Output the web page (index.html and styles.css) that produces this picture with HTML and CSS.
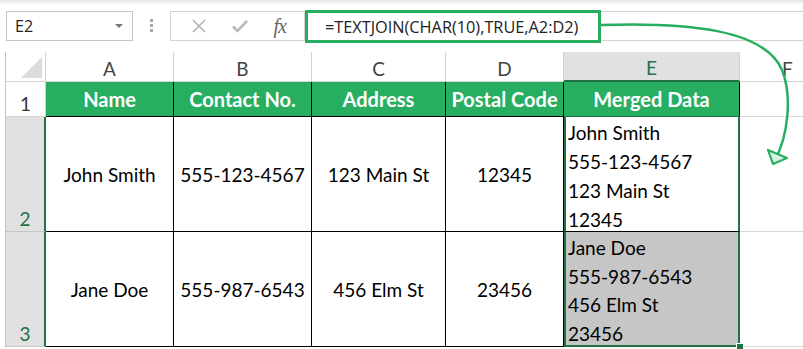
FILE: index.html
```html
<!DOCTYPE html>
<html lang="en">
  <head>
    <meta charset="UTF-8" />
    <meta name="viewport" content="width=device-width, initial-scale=1.0" />
    <title>TEXTJOIN merged data</title>
    <link rel="stylesheet" href="styles.css">
  </head>
  <body>
    <div class="topbar">
      <div class="namebox">
        <span>E2</span>
        <span class="drop"></span>
      </div>
      <div class="grip">
        <svg width="4" height="14" viewBox="0 0 4 14"><rect x="0" y="0" width="3" height="3" fill="#a6a6a6"/><rect x="0" y="5" width="3" height="3" fill="#a6a6a6"/><rect x="0" y="10" width="3" height="3" fill="#a6a6a6"/></svg>
      </div>
      <div class="fx-buttons">
        <svg class="btn" width="16" height="16" viewBox="0 0 16 16"><path d="M2 2 L14 14 M14 2 L2 14" stroke="#b3b3b3" stroke-width="1.6" fill="none"/></svg>
        <svg class="btn" width="18" height="16" viewBox="0 0 18 16"><path d="M2 8.5 L6.5 13 L16 3" stroke="#b8b8b8" stroke-width="2.6" fill="none"/></svg>
        <span class="fx">fx</span>
      </div>
      <div class="formula">
        <div class="formula-box">=TEXTJOIN(CHAR(10),TRUE,A2:D2)</div>
      </div>
    </div>

    <div class="sheet">
      <div class="corner"><span class="tri"></span></div>
      <div class="col">A</div>
      <div class="col">B</div>
      <div class="col">C</div>
      <div class="col">D</div>
      <div class="col col-sel">E</div>
      <div class="col col-last">F</div>

      <div class="row-num">1</div>
      <div class="head">Name</div>
      <div class="head">Contact No.</div>
      <div class="head">Address</div>
      <div class="head">Postal Code</div>
      <div class="head">Merged Data</div>
      <div class="empty"></div>

      <div class="row-num row-sel">2</div>
      <div class="cell">John Smith</div>
      <div class="cell">555-123-4567</div>
      <div class="cell">123 Main St</div>
      <div class="cell">12345</div>
      <div class="merged first">John Smith<br>555-123-4567<br>123 Main St<br>12345</div>
      <div class="empty"></div>

      <div class="row-num row-sel">3</div>
      <div class="cell">Jane Doe</div>
      <div class="cell">555-987-6543</div>
      <div class="cell">456 Elm St</div>
      <div class="cell">23456</div>
      <div class="merged last">Jane Doe<br>555-987-6543<br>456 Elm St<br>23456<span class="handle"></span></div>
      <div class="empty"></div>
    </div>

    <!-- annotation arrow from the formula to the merged column -->
    <svg class="arrow" width="803" height="349" viewBox="0 0 803 349">
      <path d="M601 25 C 690 22, 765 30, 782 70 C 792 95, 789 135, 774 162" stroke="#27ae60" stroke-width="2.5" fill="none"/>
      <path d="M768 150 L773 164 L787 158 Z" stroke="#27ae60" stroke-width="2.2" fill="#d9f2e3" stroke-linejoin="round"/>
    </svg>
  </body>
</html>
```

FILE: styles.css
```css
* {
  margin: 0;
  padding: 0;
  box-sizing: border-box;
}
body {
  width: 803px;
  height: 349px;
  overflow: hidden;
  position: relative;
  background: #fff;
  font-family: Lato, "Open Sans", sans-serif;
  color: #000;
}

/* formula bar */
.topbar {
  height: 52px;
  display: flex;
  align-items: flex-start;
  padding: 11px 0 0 6px;
  background: linear-gradient(to bottom, #e4e4e4 0px, #ffffff 5px);
}
.namebox {
  width: 127px;
  height: 30px;
  border: 1px solid #c6c6c6;
  background: #fff;
  display: flex;
  align-items: center;
  justify-content: space-between;
  padding: 0 9px 0 8px;
  font-family: "Open Sans", sans-serif;
  font-size: 16px;
  color: #222;
}
.drop {
  width: 0;
  height: 0;
  border-left: 4px solid transparent;
  border-right: 4px solid transparent;
  border-top: 4px solid #777;
}
.grip {
  width: 37px;
  height: 30px;
  display: flex;
  align-items: center;
  justify-content: center;
}
.fx-buttons {
  width: 135px;
  height: 30px;
  border: 1px solid #d4d4d4;
  background: #fff;
  display: flex;
  align-items: center;
  justify-content: space-around;
  padding: 0 6px 0 8px;
}
.fx {
  font-family: "Liberation Serif", serif;
  font-style: italic;
  font-size: 20px;
  color: #666;
  letter-spacing: -1px;
}
.formula {
  flex: 1;
  height: 30px;
  border-top: 1px solid #d4d4d4;
  border-bottom: 1px solid #d4d4d4;
}
.formula-box {
  width: 296px;
  height: 33px;
  margin-top: -2px;
  border: 3px solid #27ae60;
  padding-left: 17px;
  display: flex;
  align-items: center;
  font-family: "Open Sans", sans-serif;
  font-size: 16.3px;
  color: #222;
  background: #fff;
}

/* sheet grid */
.sheet {
  display: grid;
  grid-template-columns: 40px 128px 138px 134px 118px 176px 96px;
  grid-template-rows: 30px 35px 115px 115px;
  margin-left: 5px;
  border-left: 1px solid #c3c3c3;
  width: 830px;
}
.corner {
  border-right: 1px solid #d4d4d4;
  border-bottom: 1px solid #d4d4d4;
  position: relative;
}
.tri {
  position: absolute;
  right: 3px;
  bottom: 3px;
  width: 0;
  height: 0;
  border-left: 21px solid transparent;
  border-bottom: 21px solid #dcdcdc;
}
.col {
  display: flex;
  align-items: center;
  justify-content: center;
  padding-top: 3px;
  font-size: 19px;
  color: #444;
  border-right: 1px solid #d4d4d4;
  border-bottom: 1px solid #d4d4d4;
}
.col-sel {
  background: #e1e1e1;
  color: #217346;
  border-bottom: 2px solid #217346;
}
.col-last {
  border-right: none;
  justify-content: flex-start;
  padding-left: 42px;
}
.row-num {
  display: flex;
  align-items: flex-end;
  justify-content: center;
  padding-bottom: 1px;
  font-size: 19px;
  color: #333;
  border-right: 1px solid #d4d4d4;
  border-bottom: 1px solid #d4d4d4;
}
.row-sel {
  background: #e1e1e1;
  color: #217346;
  border-right: 2px solid #217346;
  border-bottom: 1px solid #c4c4c4;
}
.head {
  display: flex;
  align-items: center;
  justify-content: center;
  background: #27ae60;
  color: #fff;
  font-weight: bold;
  font-size: 20px;
  border-right: 1px solid #000;
  border-bottom: 1px solid #000;
  white-space: nowrap;
}
.cell {
  display: flex;
  align-items: center;
  justify-content: center;
  font-size: 19px;
  border-right: 1px solid #000;
  border-bottom: 1px solid #000;
  white-space: nowrap;
}
.merged {
  font-size: 19px;
  line-height: 29px;
  padding-left: 2px;
  white-space: nowrap;
  border-left: 2px solid #217346;
  border-right: 2px solid #217346;
  position: relative;
}
.merged.first {
  border-top: 1px solid #217346;
  border-bottom: 1px solid #000;
  margin-top: -1px;
  padding-top: 1px;
}
.merged.last {
  background: #c6c6c6;
  border-bottom: 2px solid #217346;
  padding-top: 2px;
  line-height: 28.5px;
}
.handle {
  position: absolute;
  right: -6px;
  bottom: -6px;
  width: 8px;
  height: 8px;
  background: #217346;
  border: 1px solid #fff;
}
.empty {
  border-bottom: 1px solid #d8d8d8;
}

.arrow {
  position: absolute;
  left: 0;
  top: 0;
  pointer-events: none;
}
```
